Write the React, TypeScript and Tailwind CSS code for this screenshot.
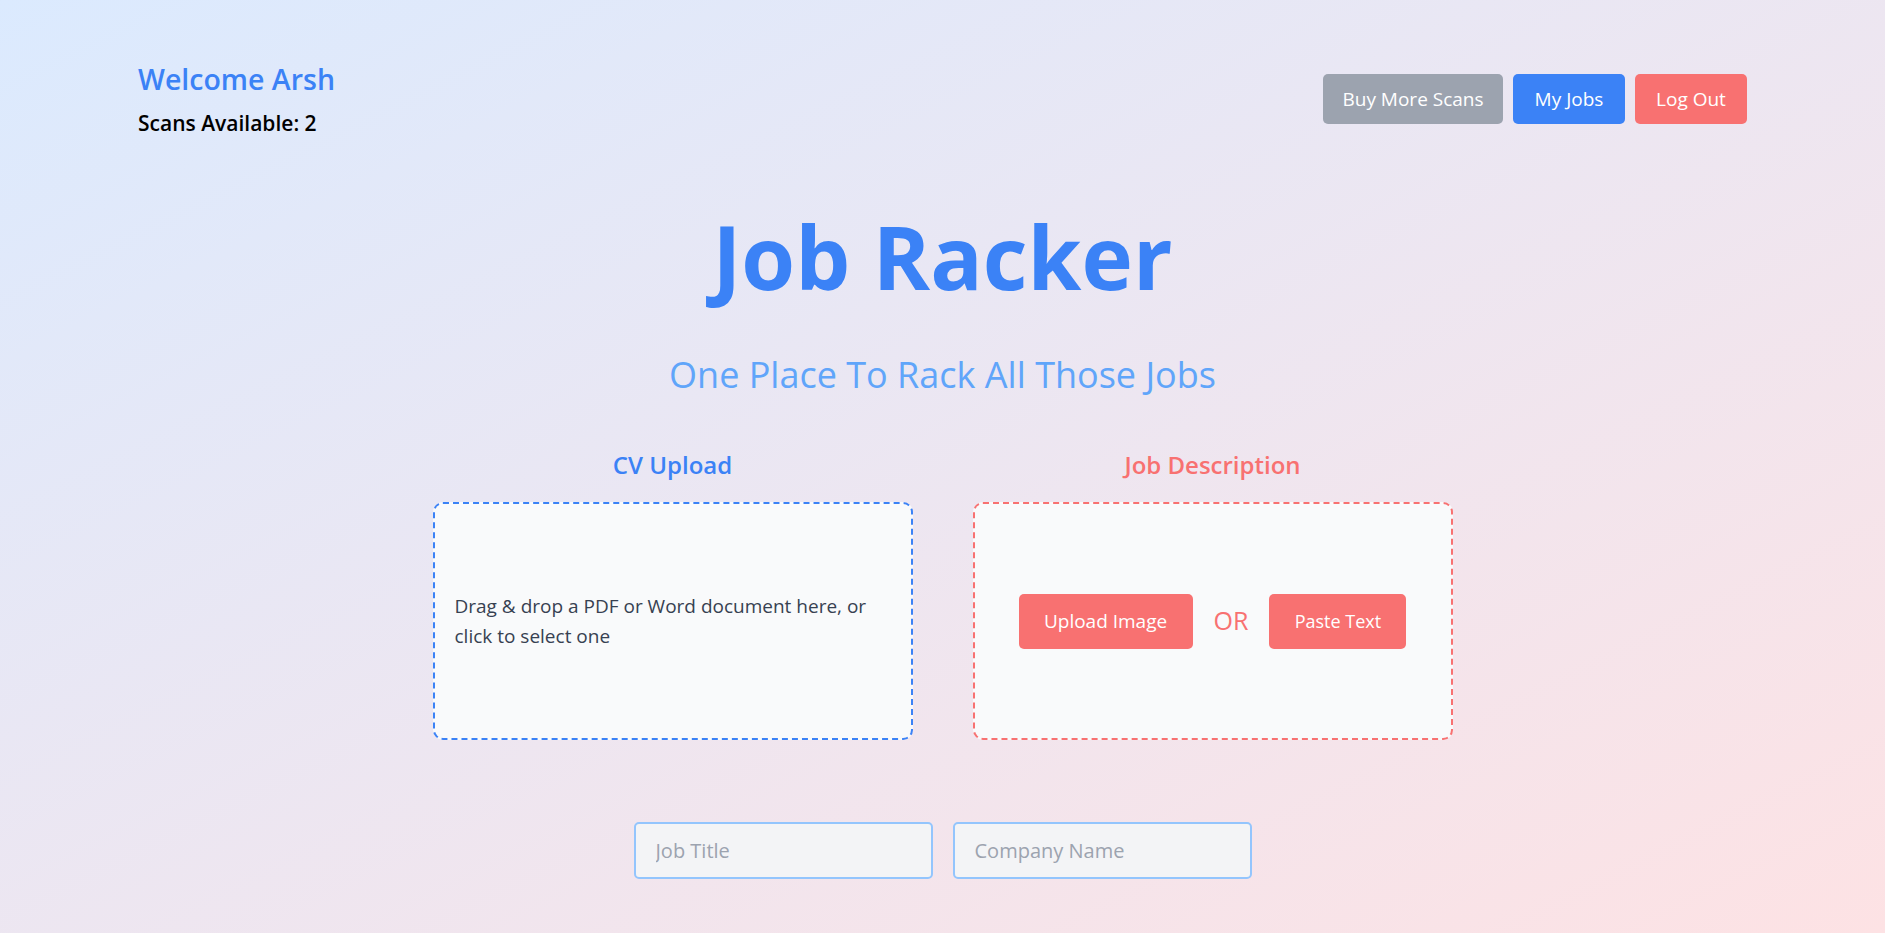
import React from "react";

function Header() {
  return (
    <div className="flex items-center justify-between px-[138px] pt-[59px]">
      <div className="flex flex-col">
        <h2 className="text-[28.5px] leading-[40px] font-semibold text-[#3b82f6]">Welcome Arsh</h2>
        <p className="mt-[8px] text-[21px] leading-[32px] font-semibold text-black">Scans Available: 2</p>
      </div>
      <div className="flex items-center gap-[10px]">
        <button className="h-[50px] w-[180px] rounded-[5px] bg-[#9ca3af] text-white text-[19px]">Buy More Scans</button>
        <button className="h-[50px] w-[112px] rounded-[5px] bg-[#3b82f6] text-white text-[19px]">My Jobs</button>
        <button className="h-[50px] w-[112px] rounded-[5px] bg-[#f87171] text-white text-[19px]">Log Out</button>
      </div>
    </div>
  );
}

function CvUpload() {
  return (
    <div className="flex flex-col items-center w-[480px]">
      <h3 className="text-[24px] leading-[35px] font-semibold text-[#3b82f6]">CV Upload</h3>
      <div className="mt-[20px] w-full h-[238px] flex items-center px-[20px] rounded-[10px] border-2 border-dashed border-[#3b82f6] bg-[#f9fafb] cursor-pointer">
        <p className="text-[19px] leading-[30px] text-[#374151]">
          Drag &amp; drop a PDF or Word document here, or click to select one
        </p>
      </div>
    </div>
  );
}

function JobDescription() {
  return (
    <div className="flex flex-col items-center w-[480px]">
      <h3 className="text-[24px] leading-[35px] font-semibold text-[#f87171]">Job Description</h3>
      <div className="mt-[20px] w-full h-[238px] flex items-center justify-center gap-[21px] rounded-[10px] border-2 border-dashed border-[#f87171] bg-[#f9fafb]">
        <button className="h-[55px] w-[174px] rounded-[5px] bg-[#f87171] text-white text-[19px]">Upload Image</button>
        <span className="text-[25px] text-[#f87171]">OR</span>
        <button className="h-[55px] w-[137px] rounded-[5px] bg-[#f87171] text-white text-[18px]">Paste Text</button>
      </div>
    </div>
  );
}

export default function App() {
  return (
    <div className="min-h-screen w-full bg-linear-to-br from-[#dbeafe] to-[#fde2e4] font-['Open_Sans',sans-serif] pb-[54px]">
      <Header />
      <div className="flex flex-col items-center">
        <h1 className="mt-[67px] text-[87px] leading-[100px] font-bold text-[#3b82f6]">Job Racker</h1>
        <p className="mt-[45px] text-[36px] leading-[48px] text-[#60a5fa]">One Place To Rack All Those Jobs</p>
        <div className="mt-[48px] flex gap-[60px]">
          <CvUpload />
          <JobDescription />
        </div>
        <div className="mt-[82px] flex gap-[20px]">
          <input
            placeholder="Job Title"
            className="h-[57px] w-[299px] px-[20px] rounded-[5px] border-2 border-[#93c5fd] bg-[#f3f4f6] text-[20px] placeholder:text-[#9ca3af] outline-none"
          />
          <input
            placeholder="Company Name"
            className="h-[57px] w-[299px] px-[20px] rounded-[5px] border-2 border-[#93c5fd] bg-[#f3f4f6] text-[20px] placeholder:text-[#9ca3af] outline-none"
          />
        </div>
      </div>
    </div>
  );
}
